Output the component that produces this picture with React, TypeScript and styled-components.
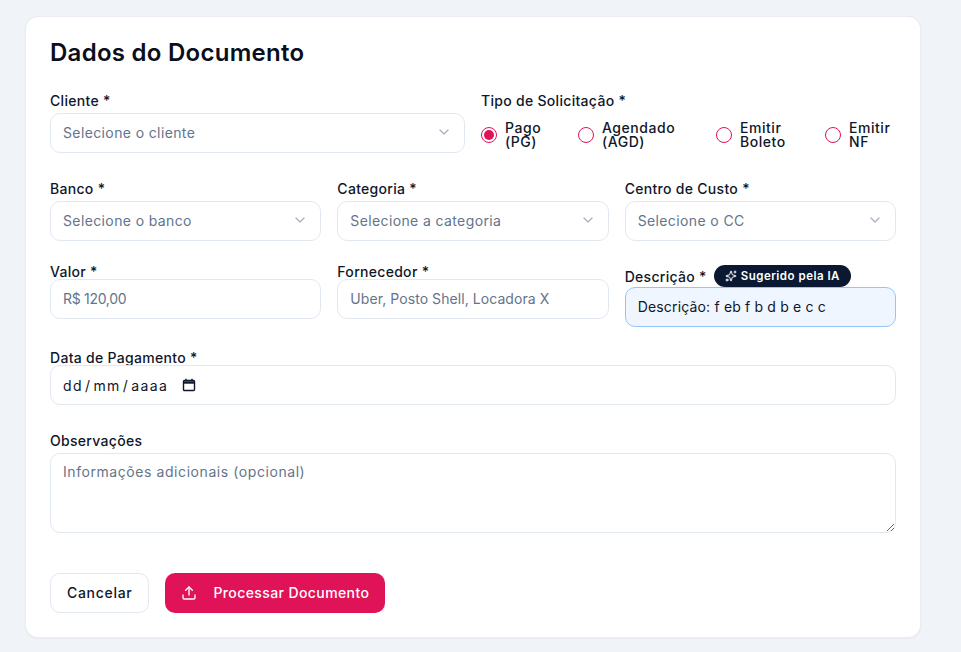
import React from "react";
import styled, { createGlobalStyle } from "styled-components";
import { ChevronDown, Upload, Sparkles } from "lucide-react";

const GlobalStyle = createGlobalStyle`
  html, body {
    margin: 0;
    background: #f0f3f8;
  }
  * {
    box-sizing: border-box;
  }
`;

const Page = styled.div`
  width: 961px;
  height: 652px;
  overflow: hidden;
  padding: 17px 0 0 26px;
  font-family: "Inter", "Liberation Sans", sans-serif;
  letter-spacing: 0.3px;
  color: #0f172a;
`;

const Card = styled.div`
  width: 894px;
  height: 620px;
  padding: 24px;
  background: #fff;
  border-radius: 12px;
  box-shadow: 0 0 0 1px #e8ecf3, 0 1px 3px rgba(15, 23, 42, 0.08);
`;

const Title = styled.h2`
  margin: 0 0 24px;
  font-size: 24px;
  line-height: 24px;
  font-weight: 600;
  letter-spacing: 0.27px;
  color: #0a0f1c;
`;

const Row = styled.div<{ $cols: number }>`
  display: grid;
  grid-template-columns: repeat(${(p) => p.$cols}, 1fr);
  column-gap: 16px;
  margin-bottom: 24px;
`;

const Field = styled.div<{ $top?: boolean }>`
  display: flex;
  flex-direction: column;
  justify-content: ${(p) => (p.$top ? "flex-start" : "flex-end")};
`;

const Label = styled.label<{ $tall?: boolean }>`
  display: flex;
  align-items: center;
  height: ${(p) => (p.$tall ? "24px" : "14px")};
  font-size: 14px;
  font-weight: 500;
  line-height: 14px;
`;

const LabelRow = styled.div`
  display: flex;
  align-items: center;
  gap: 7px;
  height: 22px;
  font-size: 14px;
  font-weight: 500;
`;

const Badge = styled.span`
  display: inline-flex;
  align-items: center;
  gap: 4px;
  height: 22px;
  padding: 0 11px;
  border-radius: 11px;
  background: #0a1931;
  color: #fff;
  font-size: 11.5px;
  font-weight: 600;
  letter-spacing: 0.5px;
`;

const SelectBox = styled.div`
  display: flex;
  align-items: center;
  justify-content: space-between;
  height: 40px;
  padding: 0 12px 2px;
  background: #fff;
  border: 1px solid #e2e8f0;
  border-radius: 10px;
  font-size: 14px;
  letter-spacing: 0.38px;
  color: #64748b;
  svg {
    color: #aab3c0;
  }
`;

const TextInput = styled.input<{ $suggested?: boolean; $spacing: number }>`
  width: 100%;
  height: 40px;
  padding: 0 12px 2px;
  background: ${(p) => (p.$suggested ? "#eff6ff" : "#fff")};
  border: 1px solid ${(p) => (p.$suggested ? "#93c5fd" : "#e2e8f0")};
  border-radius: 10px;
  outline: none;
  font: inherit;
  font-size: 14px;
  letter-spacing: ${(p) => p.$spacing}px;
  color: #0f172a;
  &::placeholder {
    color: #64748b;
    opacity: 1;
  }
`;

const DateBox = styled.div`
  display: flex;
  align-items: center;
  gap: 14px;
  height: 40px;
  padding: 0 12px;
  background: #fff;
  border: 1px solid #e2e8f0;
  border-radius: 10px;
  font-size: 14px;
  letter-spacing: 1.4px;
  color: #0f172a;
`;

const DateSlash = styled.span`
  margin: 0 2px;
`;

const TextArea = styled.textarea`
  display: block;
  width: 100%;
  height: 80px;
  padding: 8px 12px;
  background: #fff;
  border: 1px solid #e2e8f0;
  border-radius: 10px;
  outline: none;
  font: inherit;
  font-size: 14px;
  line-height: 20px;
  letter-spacing: 0.57px;
  &::placeholder {
    color: #64748b;
    opacity: 1;
  }
`;

const RadioGroup = styled.div`
  display: grid;
  grid-template-columns: 97px 138px 109px 1fr;
  height: 40px;
  padding-top: 4px;
  align-items: center;
`;

const RadioOption = styled.div`
  display: flex;
  align-items: center;
  gap: 8px;
  font-size: 14px;
  font-weight: 500;
  line-height: 14px;
  letter-spacing: 0.55px;
`;

const RadioDot = styled.span<{ $checked?: boolean }>`
  display: flex;
  align-items: center;
  justify-content: center;
  flex: none;
  width: 16px;
  height: 16px;
  border: 1px solid #e01258;
  border-radius: 50%;
  &::after {
    content: "";
    display: ${(p) => (p.$checked ? "block" : "none")};
    width: 10px;
    height: 10px;
    border-radius: 50%;
    background: #e01258;
  }
`;

const Actions = styled.div`
  display: flex;
  gap: 16px;
  margin-top: 40px;
`;

const Button = styled.button<{ $primary?: boolean }>`
  display: inline-flex;
  align-items: center;
  height: 40px;
  gap: 16px;
  padding: 0 16px 1px;
  background: ${(p) => (p.$primary ? "#e01258" : "#fff")};
  border: ${(p) => (p.$primary ? "none" : "1px solid #e2e8f0")};
  border-radius: 10px;
  color: ${(p) => (p.$primary ? "#fff" : "#0f172a")};
  font: inherit;
  font-size: 14px;
  font-weight: 500;
  letter-spacing: ${(p) => (p.$primary ? "0.4px" : "0.7px")};
`;

const Select = ({ placeholder }: { placeholder: string }) => (
  <SelectBox>
    {placeholder}
    <ChevronDown size={16} />
  </SelectBox>
);

const App = () => {
  return (
    <Page>
      <GlobalStyle />
      <Card>
        <Title>Dados do Documento</Title>
        <Row $cols={2}>
          <Field>
            <Label $tall>Cliente *</Label>
            <Select placeholder="Selecione o cliente" />
          </Field>
          <Field>
            <Label $tall>Tipo de Solicitação *</Label>
            <RadioGroup>
              <RadioOption>
                <RadioDot $checked />
                <span>Pago<br />(PG)</span>
              </RadioOption>
              <RadioOption>
                <RadioDot />
                <span>Agendado<br />(AGD)</span>
              </RadioOption>
              <RadioOption>
                <RadioDot />
                <span>Emitir<br />Boleto</span>
              </RadioOption>
              <RadioOption>
                <RadioDot />
                <span>Emitir<br />NF</span>
              </RadioOption>
            </RadioGroup>
          </Field>
        </Row>
        <Row $cols={3}>
          <Field>
            <Label $tall>Banco *</Label>
            <Select placeholder="Selecione o banco" />
          </Field>
          <Field>
            <Label $tall>Categoria *</Label>
            <Select placeholder="Selecione a categoria" />
          </Field>
          <Field>
            <Label $tall>Centro de Custo *</Label>
            <Select placeholder="Selecione o CC" />
          </Field>
        </Row>
        <Row $cols={3}>
          <Field $top>
            <Label>Valor *</Label>
            <TextInput $spacing={-0.3} placeholder="R$ 120,00" />
          </Field>
          <Field $top>
            <Label>Fornecedor *</Label>
            <TextInput $spacing={0.07} placeholder="Uber, Posto Shell, Locadora X" />
          </Field>
          <Field>
            <LabelRow>
              Descrição *
              <Badge>
                <Sparkles size={12} />
                Sugerido pela IA
              </Badge>
            </LabelRow>
            <TextInput $suggested $spacing={0.17} defaultValue="Descrição: f eb f b d b e c c" />
          </Field>
        </Row>
        <Row $cols={1}>
          <Field>
            <Label>Data de Pagamento *</Label>
            <DateBox>
              <span>
                dd<DateSlash>/</DateSlash>mm<DateSlash>/</DateSlash>aaaa
              </span>
              <svg width="14" height="14" viewBox="0 0 14 14" fill="none" stroke="#0f172a">
                <rect x="1.5" y="2.5" width="11" height="10" rx="1" strokeWidth="1.4" />
                <path d="M1.5 4.5h11" strokeWidth="2.4" />
                <path d="M4 .8v2M10 .8v2" strokeWidth="1.4" />
              </svg>
            </DateBox>
          </Field>
        </Row>
        <Field>
          <Label $tall>Observações</Label>
          <TextArea placeholder="Informações adicionais (opcional)" />
        </Field>
        <Actions>
          <Button>Cancelar</Button>
          <Button $primary>
            <Upload size={16} />
            Processar Documento
          </Button>
        </Actions>
      </Card>
    </Page>
  );
};

export default App;
